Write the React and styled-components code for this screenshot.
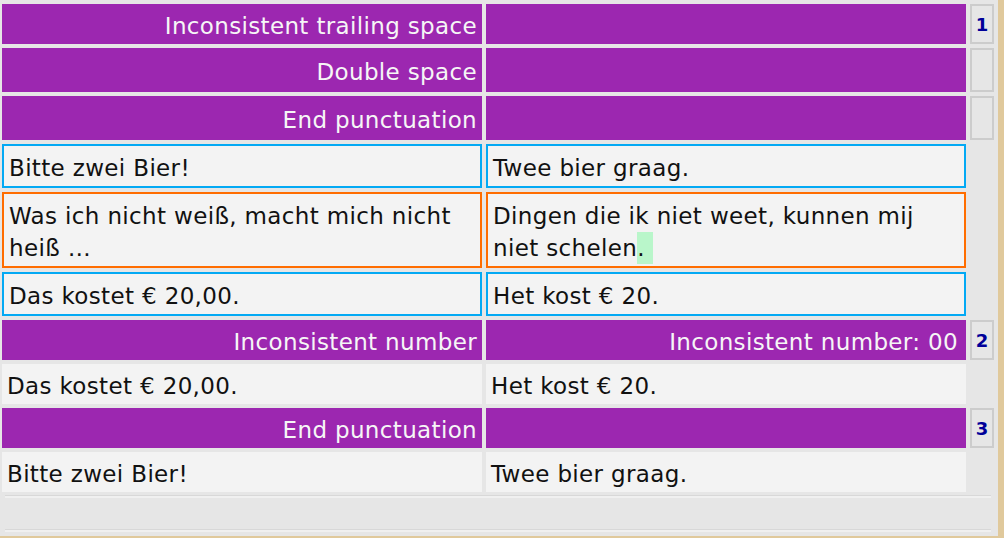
import React from "react";
import styled, { createGlobalStyle } from "styled-components";

const GlobalStyle = createGlobalStyle`
  html, body {
    margin: 0;
    padding: 0;
    background: #e0c99c;
  }
  body {
    font-family: "DejaVu Sans", Verdana, sans-serif;
  }
`;

const Page = styled.div`
  width: 998px;
  height: 536px;
  box-sizing: border-box;
  padding: 4px 0 0 2px;
  background: #e6e6e6;
  display: flex;
  flex-direction: column;
  gap: 4px;
  overflow: hidden;
`;

const Row = styled.div`
  display: flex;
  gap: 4px;
  align-items: stretch;
`;

const Cell = styled.div`
  width: 480px;
  box-sizing: border-box;
  padding: ${(p) => (p.$tall ? "8px" : "6px")} ${(p) => p.$padRight || 5}px
    ${(p) => (p.$tall ? "4px" : "2px")} 5px;
  font-size: 23px;
  letter-spacing: 0.35px;
  line-height: 32px;
  white-space: pre-wrap;
  border: ${(p) => (p.$border ? `2px solid ${p.$border}` : "none")};
`;

const HeaderCell = styled(Cell)`
  background: #9c27b0;
  color: #f6f6f6;
  text-align: right;
`;

const TextCell = styled(Cell)`
  background: #f3f3f3;
  color: #111;
  text-align: left;
`;

const Badge = styled.div`
  width: 24px;
  box-sizing: border-box;
  border: 2px solid #cccccc;
  background: #e6e6e6;
  color: #000099;
  font-weight: bold;
  font-size: 18px;
  display: flex;
  align-items: center;
  justify-content: center;
`;

const BadgeSpace = styled.div`
  width: 24px;
`;

const Mark = styled.span`
  display: inline-block;
  height: 32px;
  vertical-align: top;
  padding-right: 8px;
  background: #b9f6ca;
`;

const Footer = styled.div`
  margin: -1px 0 0 3px;
  width: 986px;
  height: 35px;
  box-sizing: border-box;
  border-top: 1px solid #d8d8d8;
  border-bottom: 1px solid #d8d8d8;
  box-shadow: inset 0 2px 0 #f0f0f0, 0 2px 0 #f0f0f0;
`;

const blue = "#03a9f4";
const orange = "#ff6d00";

export default function App() {
  return (
    <>
      <GlobalStyle />
      <Page>
        <Row>
          <HeaderCell>Inconsistent trailing space</HeaderCell>
          <HeaderCell />
          <Badge>1</Badge>
        </Row>
        <Row>
          <HeaderCell $tall>Double space</HeaderCell>
          <HeaderCell $tall />
          <Badge />
        </Row>
        <Row>
          <HeaderCell $tall>End punctuation</HeaderCell>
          <HeaderCell $tall />
          <Badge />
        </Row>
        <Row>
          <TextCell $border={blue}>Bitte zwei Bier!</TextCell>
          <TextCell $border={blue}>Twee bier graag.</TextCell>
          <BadgeSpace />
        </Row>
        <Row>
          <TextCell $border={orange}>
            Was ich nicht weiß, macht mich nicht heiß …
          </TextCell>
          <TextCell $border={orange}>
            Dingen die ik niet weet, kunnen mij niet schelen<Mark>.</Mark>
          </TextCell>
          <BadgeSpace />
        </Row>
        <Row>
          <TextCell $border={blue}>Das kostet € 20,00.</TextCell>
          <TextCell $border={blue}>Het kost € 20.</TextCell>
          <BadgeSpace />
        </Row>
        <Row>
          <HeaderCell>Inconsistent number</HeaderCell>
          <HeaderCell $padRight={8}>Inconsistent number: 00</HeaderCell>
          <Badge>2</Badge>
        </Row>
        <Row>
          <TextCell>Das kostet € 20,00.</TextCell>
          <TextCell>Het kost € 20.</TextCell>
          <BadgeSpace />
        </Row>
        <Row>
          <HeaderCell>End punctuation</HeaderCell>
          <HeaderCell />
          <Badge>3</Badge>
        </Row>
        <Row>
          <TextCell>Bitte zwei Bier!</TextCell>
          <TextCell>Twee bier graag.</TextCell>
          <BadgeSpace />
        </Row>
        <Footer />
      </Page>
    </>
  );
}
